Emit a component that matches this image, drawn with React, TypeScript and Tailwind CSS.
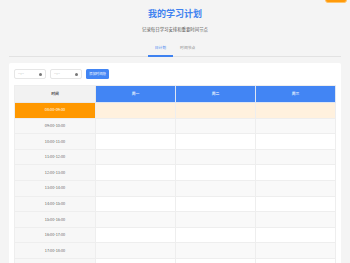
export default function App() {
  // the last row sits just under the window edge; only its top border shows
  const slots = [
    "08:00-09:00",
    "09:00-10:00",
    "10:00-11:00",
    "11:00-12:00",
    "12:00-13:00",
    "13:00-14:00",
    "14:00-15:00",
    "15:00-16:00",
    "16:00-17:00",
    "17:00-18:00",
    "",
  ];
  const days = ["周一", "周二", "周三"];

  return (
    <div
      className="relative min-h-screen overflow-hidden bg-[#f4f4f4]"
      style={{ fontFamily: '"Noto Sans CJK SC", "Noto Sans", sans-serif' }}
    >
      {/* floating button peeking from top */}
      <div className="absolute right-[3px] top-[-4px] h-[7px] w-[22px] rounded-[3px] border border-[#ffc46b] bg-[#ff9a0a]" />

      <div className="px-[9px]">
        <header className="pt-[8px] text-center">
          <h1 className="text-[9px] font-bold leading-[11px] text-[#3f82f0]">我的学习计划</h1>
          <p className="mt-[7px] text-[4.4px] leading-[6px] text-[#555]">记录每日学习安排和重要时间节点</p>
        </header>

        <nav className="mt-[13px] flex justify-center border-b border-[#e2e2e2]">
          <button className="-mb-px border-b-2 border-[#3f82f0] px-[7px] pb-[4px] text-[3.8px] leading-[6px] text-[#3f82f0]">
            日计划
          </button>
          <button className="-mb-px border-b-2 border-transparent px-[7px] pb-[4px] text-[3.8px] leading-[6px] text-[#888]">
            时间节点
          </button>
        </nav>

        <section className="mt-[6px] rounded-[2px] bg-white px-[5px] pt-[6px]">
          <div className="flex items-center gap-[4px]">
            {[0, 1].map((i) => (
              <div
                key={i}
                className="flex h-[10px] w-[32px] items-center justify-between rounded-[2px] border border-[#e6e6e6] bg-white px-[3px]"
              >
                <span className="text-[3.6px] leading-none text-[#999]">--:--</span>
                <span className="h-[3px] w-[3px] rounded-full bg-[#777]" />
              </div>
            ))}
            <button className="h-[10px] rounded-[1.5px] bg-[#4285f4] px-[3px] text-[3.4px] leading-none text-white">
              添加时间段
            </button>
          </div>

          <div className="mt-[6px] grid grid-cols-[81px_1fr_1fr_1fr] border-l border-t border-[#eeeeee] text-[3.8px]">
            <div className="flex h-[17px] items-center justify-center border-b border-r border-[#e9e9e9] bg-[#f2f2f2] font-semibold text-[#555]">
              时间
            </div>
            {days.map((d) => (
              <div
                key={d}
                className="flex h-[17px] items-center justify-center border-b border-r border-[#dfe6f2] bg-[#4285f4] font-medium text-white"
              >
                {d}
              </div>
            ))}
            {slots.map((s, i) => {
              const current = i === 0;
              const odd = i % 2 === 1;
              return [
                <div
                  key={"t" + i}
                  className={
                    current
                      ? "flex h-[15.6px] items-center justify-center border-b border-r border-[#eeeeee] bg-[#ff9800] text-white"
                      : "flex h-[15.6px] items-center justify-center border-b border-r border-[#eeeeee] bg-[#f7f7f7] text-[#666]"
                  }
                >
                  {s}
                </div>,
                ...days.map((d) => (
                  <div
                    key={i + d}
                    className={
                      current
                        ? "h-[15.6px] border-b border-r border-[#eeeeee] bg-[#fff1de]"
                        : odd
                          ? "h-[15.6px] border-b border-r border-[#eeeeee] bg-[#f9f9f9]"
                          : "h-[15.6px] border-b border-r border-[#eeeeee] bg-white"
                    }
                  />
                )),
              ];
            })}
          </div>
        </section>
      </div>
    </div>
  );
}
